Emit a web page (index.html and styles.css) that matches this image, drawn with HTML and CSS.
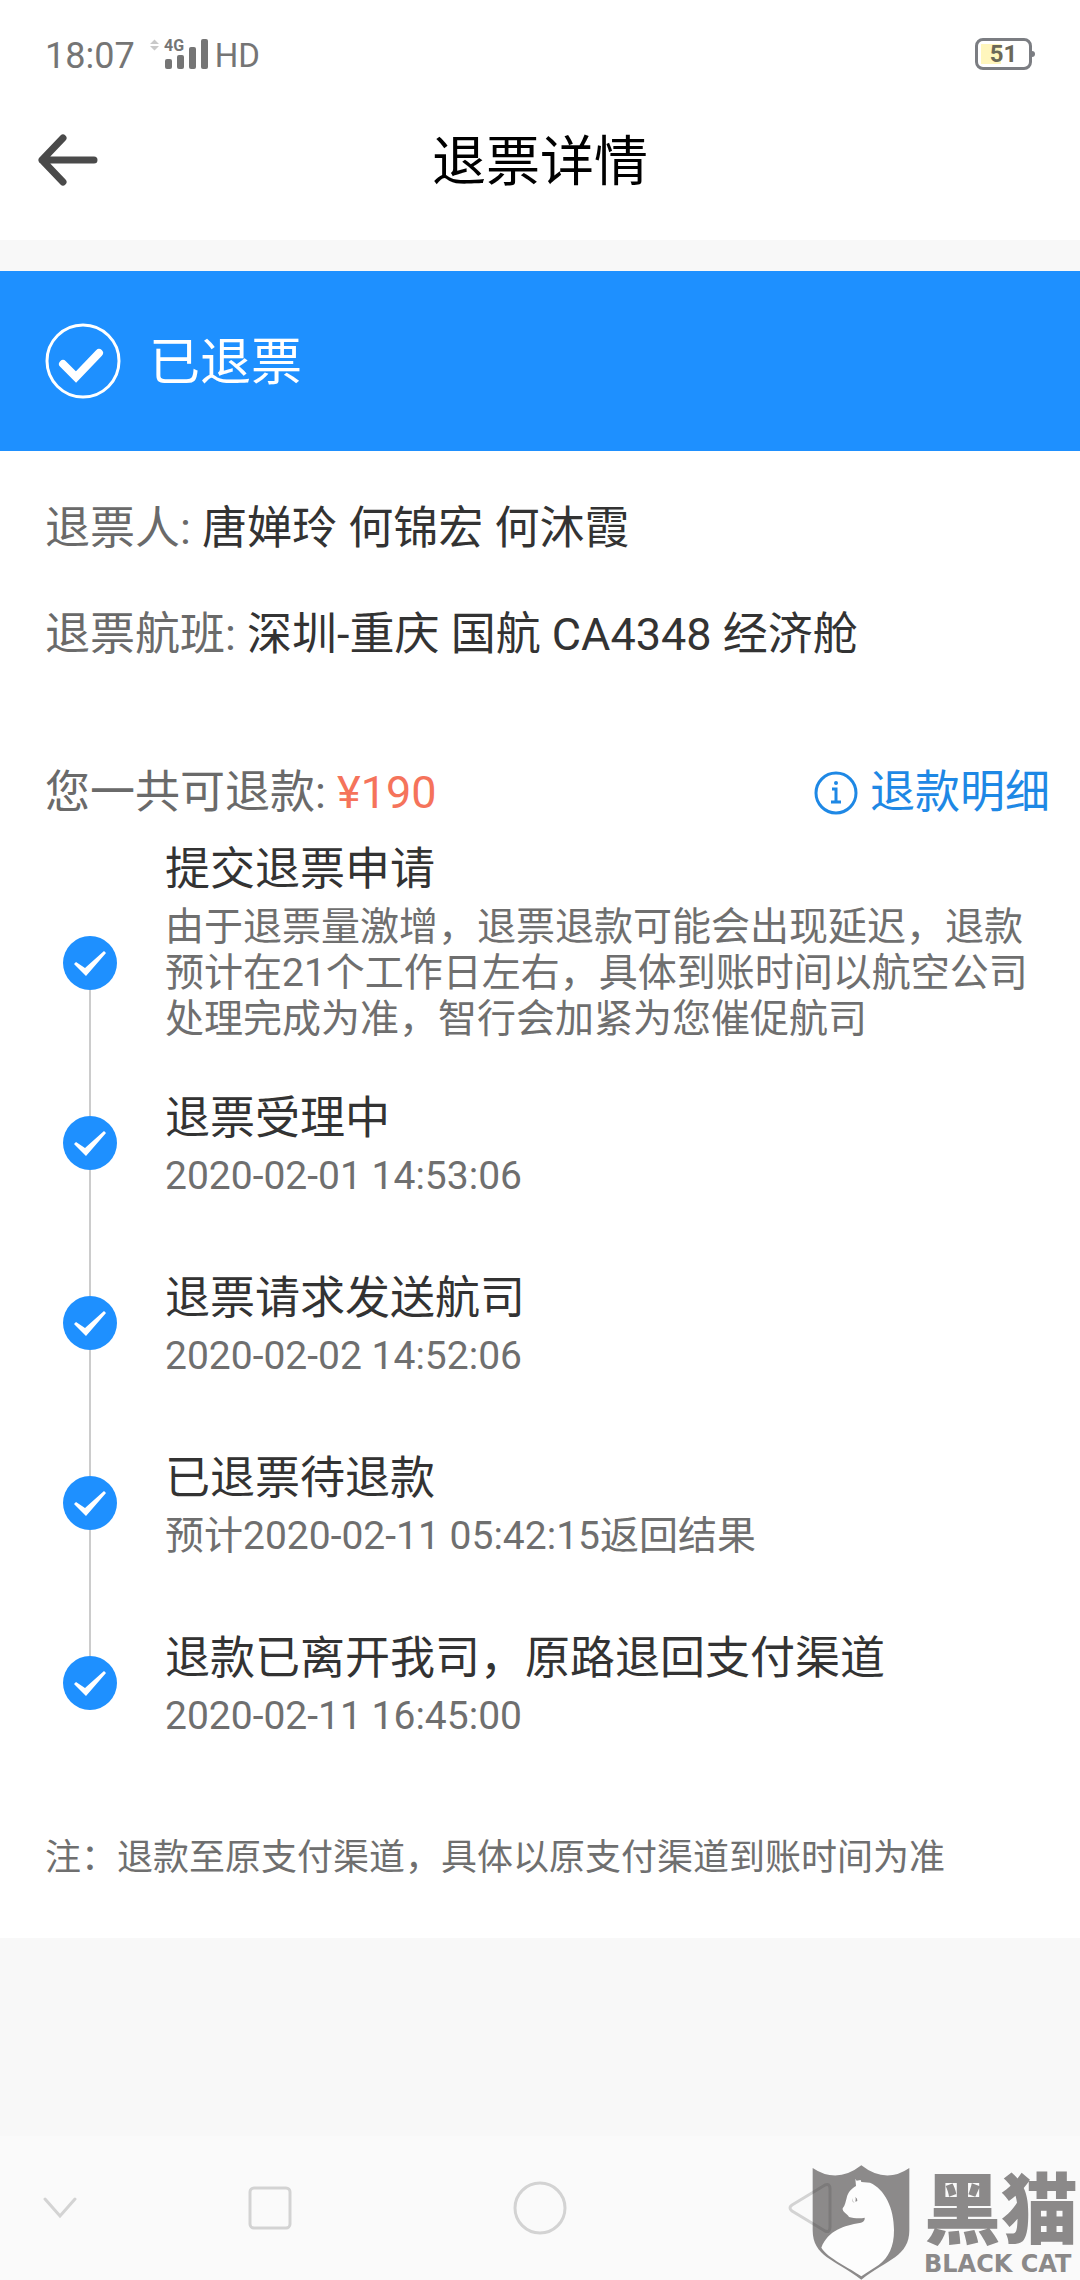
FILE: index.html
```html
<!DOCTYPE html>
<html lang="zh-CN">
<head>
<meta charset="utf-8">
<meta name="viewport" content="width=device-width, initial-scale=1">
<title>退票详情</title>
<link rel="stylesheet" href="styles.css">
</head>
<body>
<svg width="0" height="0" class="defs" aria-hidden="true">
  <symbol id="tick" viewBox="0 0 54 54">
    <circle cx="27" cy="27" r="27" fill="#1e90ff"/>
    <path d="M11 28l2-2 9 6 19-17 2 2-20 23z" fill="#fff"/>
  </symbol>
</svg>

<div class="status-bar">
  <div class="status-left">
    <span class="clock">18:07</span>
    <svg class="signal" width="58" height="32" viewBox="0 0 58 32" aria-label="4G">
      <path d="M0 6l4.500-4.500L9 6zM0 8h9l-4.500 4.500z" fill="#c9c9c9"/>
      <text x="14" y="13" class="signal-text">4G</text>
      <g fill="#757575">
        <rect x="15" y="21" width="7" height="10" rx="2"/>
        <rect x="27" y="17" width="7" height="14" rx="2"/>
        <rect x="39" y="9" width="7" height="22" rx="2"/>
        <rect x="51" y="1" width="7" height="30" rx="2"/>
      </g>
    </svg>
    <span class="hd">HD</span>
  </div>
  <div class="battery"><span class="battery-text">51</span></div>
</div>

<header class="nav-bar">
  <button class="back" type="button" aria-label="返回">
    <svg width="60" height="52" viewBox="0 0 60 52" fill="none" stroke="#4a4a4a" stroke-width="7" stroke-linecap="round" stroke-linejoin="round">
      <path d="M25 4L4 26l21 22M4 26h52"/>
    </svg>
  </button>
  <h1 class="title">退票详情</h1>
</header>

<section class="banner">
  <svg width="76" height="76" viewBox="0 0 76 76" fill="none" stroke="#fff">
    <circle cx="38" cy="38" r="36" stroke-width="3"/>
    <path d="M18 41l13 13 23-24" stroke-width="8" stroke-linecap="round" stroke-linejoin="miter"/>
  </svg>
  <span class="banner-text">已退票</span>
</section>

<main class="detail">
  <div class="info">
    <p class="row"><span class="label">退票人: </span>唐婵玲 何锦宏 何沐霞</p>
    <p class="row"><span class="label">退票航班: </span>深圳-重庆 国航 CA4348 经济舱</p>
  </div>

  <div class="refund">
    <p class="row"><span class="label">您一共可退款: </span><span class="price">¥190</span></p>
    <a class="link" href="#">
      <svg width="44" height="44" viewBox="0 0 44 44" fill="none" stroke="#1e88e5" stroke-width="3">
        <circle cx="22" cy="22" r="20"/>
        <path d="M18 18h4v13M17 31h10"/>
        <circle cx="22" cy="12" r="2" fill="#1e88e5" stroke="none"/>
      </svg>
      <span>退款明细</span>
    </a>
  </div>

  <ol class="steps">
    <li class="step">
      <div class="rail"><svg class="dot"><use href="#tick"/></svg></div>
      <div class="body">
        <h2 class="name">提交退票申请</h2>
        <p class="desc">由于退票量激增，退票退款可能会出现延迟，退款预计在21个工作日左右，具体到账时间以航空公司处理完成为准，智行会加紧为您催促航司</p>
      </div>
    </li>
    <li class="step">
      <div class="rail"><svg class="dot"><use href="#tick"/></svg></div>
      <div class="body">
        <h2 class="name">退票受理中</h2>
        <p class="desc">2020-02-01 14:53:06</p>
      </div>
    </li>
    <li class="step">
      <div class="rail"><svg class="dot"><use href="#tick"/></svg></div>
      <div class="body">
        <h2 class="name">退票请求发送航司</h2>
        <p class="desc">2020-02-02 14:52:06</p>
      </div>
    </li>
    <li class="step">
      <div class="rail"><svg class="dot"><use href="#tick"/></svg></div>
      <div class="body">
        <h2 class="name">已退票待退款</h2>
        <p class="desc">预计2020-02-11 05:42:15返回结果</p>
      </div>
    </li>
    <li class="step">
      <div class="rail"><svg class="dot"><use href="#tick"/></svg></div>
      <div class="body">
        <h2 class="name">退款已离开我司，原路退回支付渠道</h2>
        <p class="desc">2020-02-11 16:45:00</p>
      </div>
    </li>
  </ol>

  <p class="note">注：退款至原支付渠道，具体以原支付渠道到账时间为准</p>
</main>

<nav class="system-nav">
  <button class="key key-hide" type="button" aria-label="收起">
    <svg width="34" height="24" viewBox="0 0 34 24"><path d="M2 3l15 17L32 3"/></svg>
  </button>
  <button class="key" type="button" aria-label="最近任务">
    <svg width="44" height="44" viewBox="0 0 44 44"><rect x="2" y="2" width="40" height="40" rx="4"/></svg>
  </button>
  <button class="key" type="button" aria-label="主页">
    <svg width="54" height="54" viewBox="0 0 54 54"><circle cx="27" cy="27" r="25"/></svg>
  </button>
  <button class="key" type="button" aria-label="返回">
    <svg width="44" height="52" viewBox="0 0 44 52"><path d="M4 23L37 3q5-2 5 4v38q0 6-5 4L4 29q-4-3 0-6z"/></svg>
  </button>
</nav>

<div class="watermark">
  <svg width="98" height="115" viewBox="92 104 294 345">
    <path d="M94 113Q167 162 240 105Q313 162 384 113V300C384 378 318 388 240 448C160 388 94 378 94 300Z" fill="#3c3838" fill-opacity=".580"/>
    <path d="M222 145L226 151L238 149L240 155L266 157C310 176 338 232 338 300C338 350 322 382 292 404L240 438C205 412 140 385 120 352C140 300 190 285 235 278C247 275 251 270 250 262C235 266 215 263 203 260C198 250 182 245 184 234C192 225 192 215 196 203C200 185 210 175 224 167Z" fill="#fdfdfd"/>
    <path d="M212 203q2 12 8 14q-8 0-8-14zM222 200q7 4 6 12l-6 2q3-6 0-14z" fill="#8b8989"/>
  </svg>
  <div class="brand">
    <span class="brand-cn">黑猫</span>
    <span class="brand-en">BLACK CAT</span>
  </div>
</div>
</body>
</html>
```
FILE: styles.css
```css
* {
  box-sizing: border-box;
}

body {
  position: relative;
  display: flex;
  flex-direction: column;
  min-height: 100vh;
  margin: 0;
  background: #f8f8f8;
  color: #333;
  font-family: Roboto, "Noto Sans CJK SC", sans-serif;
  font-size: 45px;
  line-height: 54px;
}

h1,
h2,
p,
ol {
  margin: 0;
  padding: 0;
  font-weight: 400;
}

button {
  padding: 0;
  border: 0;
  background: none;
}

svg {
  display: block;
  flex: none;
}

.defs {
  position: absolute;
}

/* Status bar */
.status-bar {
  display: flex;
  align-items: center;
  justify-content: space-between;
  height: 108px;
  padding: 0 45px;
  background: #fff;
  color: #757575;
}

.status-left {
  display: flex;
  align-items: center;
  gap: 7px;
}

.clock,
.hd {
  padding-top: 3px;
}

.clock {
  margin-right: 8px;
  font-size: 36px;
}

.signal {
  overflow: visible;
}

.signal-text {
  fill: #757575;
  font-size: 16px;
  font-weight: 700;
}

.hd {
  font-size: 33px;
}

.battery {
  position: relative;
  width: 57px;
  height: 32px;
  margin-right: 3px;
  border: 3px solid #7b7d82;
  border-radius: 8px;
  background: linear-gradient(#fff6bd, #fff6bd) 3px 3px / 20px 20px no-repeat;
  text-align: center;
}

.battery::after {
  content: "";
  position: absolute;
  top: 10px;
  right: -6px;
  width: 3px;
  height: 6px;
  border-radius: 0 3px 3px 0;
  background: #7b7d82;
}

.battery-text {
  display: block;
  color: #6b6858;
  font-size: 24px;
  font-weight: 700;
  line-height: 27px;
}

/* Page header */
.nav-bar {
  display: grid;
  grid-template-columns: 1fr auto 1fr;
  align-items: center;
  height: 132px;
  padding: 0 38px 29px;
  margin-bottom: 31px;
  background: #fff;
}

.title {
  padding-top: 6px;
  color: #000;
  font-size: 54px;
}

.banner {
  display: flex;
  align-items: center;
  gap: 28px;
  height: 180px;
  padding: 0 45px;
  background: #1e90ff;
  color: #fff;
  font-size: 51px;
}

.banner-text {
  padding-top: 4px;
}

/* Refund details */
.detail {
  padding: 51px 30px 57px 45px;
  background: #fff;
}

.info {
  display: flex;
  flex-direction: column;
  gap: 52px;
}

.label {
  color: #6a6a6a;
}

.refund {
  display: flex;
  align-items: center;
  justify-content: space-between;
  margin: 104px 0 23px;
}

.price {
  color: #f5735b;
}

.link {
  display: flex;
  align-items: center;
  gap: 12px;
  color: #1e88e5;
  text-decoration: none;
}

/* Progress */
.steps {
  list-style: none;
}

.step {
  display: flex;
  gap: 30px;
}

.rail {
  display: flex;
  flex-direction: column;
  align-items: center;
  width: 90px;
}

.rail::before,
.rail::after {
  content: "";
  width: 2px;
  background: #ccc;
}

.rail::before {
  flex: 1;
}

.rail::after {
  height: 65px;
}

.step:first-child .rail::before,
.step:last-child .rail::after {
  background: none;
}

.dot {
  width: 54px;
  height: 54px;
}

.body {
  flex: 1;
  padding: 37px 0 36px;
}

.step:first-child .body {
  padding: 0 0 13px;
}

.name {
  margin-bottom: 7px;
  font-size: 45px;
}

.desc {
  color: #6f6f6f;
  font-size: 39px;
  line-height: 46px;
}

.note {
  margin-top: 60px;
  color: #6f6f6f;
  font-size: 36px;
  line-height: 46px;
}

/* System keys */
.system-nav {
  display: grid;
  grid-template-columns: 1fr 2fr 2fr 2fr 1fr;
  height: 144px;
  margin-top: auto;
  background: #fafafa;
}

.key {
  display: flex;
  align-items: center;
  justify-content: center;
}

.key-hide {
  justify-content: flex-start;
  padding-left: 43px;
}

.key svg {
  fill: none;
  stroke: #d3d3d3;
  stroke-width: 3;
  stroke-linecap: round;
}

/* Watermark */
.watermark {
  position: absolute;
  right: 2px;
  bottom: 0;
  display: flex;
  align-items: flex-end;
  gap: 14px;
  color: #8b8989;
}

.brand {
  display: flex;
  flex-direction: column;
  padding-bottom: 2px;
}

.brand-cn {
  font-family: "Noto Sans CJK SC", sans-serif;
  font-size: 77px;
  font-weight: 900;
  line-height: 90px;
}

.brand-en {
  font-family: "DejaVu Sans", sans-serif;
  font-size: 24px;
  font-weight: 700;
  line-height: 28px;
  white-space: nowrap;
}
```
